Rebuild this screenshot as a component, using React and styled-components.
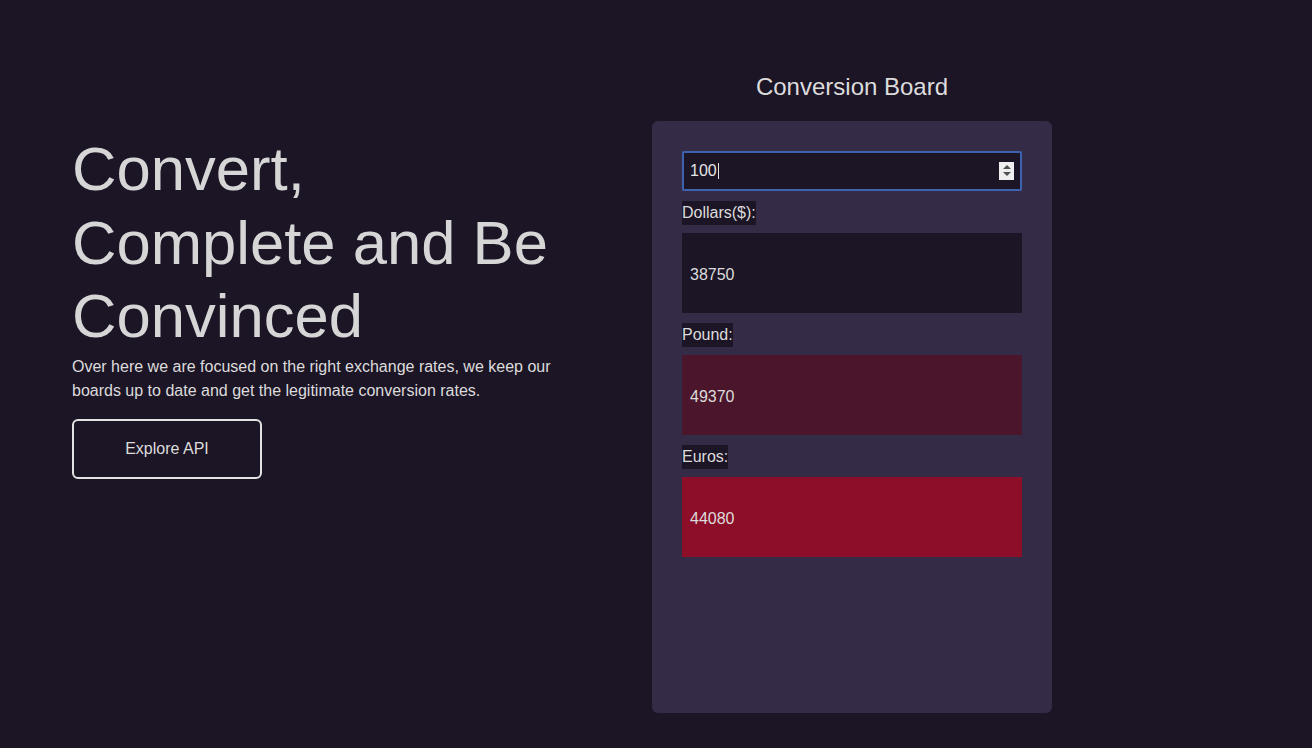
import styled, { createGlobalStyle } from 'styled-components';

const GlobalStyle = createGlobalStyle`
	html, body {
		margin: 0;
		padding: 0;
		background: #1c1526;
	}

	body {
		font-family: "Liberation Sans", Arial, sans-serif;
		color: #d9d9d9;
	}
`;

const Page = styled.div`
	display: flex;
	align-items: flex-start;
	box-sizing: border-box;
	width: 1312px;
	height: 748px;
	padding: 73px 0 0 72px;
	background: #1c1526;
	overflow: hidden;
`;

const Hero = styled.section`
	width: 500px;
	margin-top: 59px;
	margin-right: 80px;

	h1 {
		margin: 0;
		font-size: 61.6px;
		font-weight: 400;
		line-height: 73.6px;
		color: #d6d6d6;
	}

	p {
		margin: 2px 0 16px;
		font-size: 16px;
		line-height: 24px;
		color: #dcdcdc;
	}
`;

const OutlineButton = styled.button`
	width: 190px;
	height: 60px;
	background: transparent;
	border: 2px solid #e2e2e2;
	border-radius: 6px;
	color: #dcdcdc;
	font-family: "Liberation Sans", Arial, sans-serif;
	font-size: 16px;
	cursor: pointer;
`;

const Board = styled.section`
	display: flex;
	flex-direction: column;
	align-items: center;
	width: 400px;

	h2 {
		margin: 0 0 20px;
		font-size: 24px;
		font-weight: 400;
		line-height: 27.6px;
		color: #dcdcdc;
	}
`;

const Card = styled.div`
	box-sizing: border-box;
	width: 400px;
	height: 592px;
	padding: 30px;
	background: #342b46;
	border-radius: 6px;
`;

const AmountField = styled.div`
	display: flex;
	align-items: center;
	box-sizing: border-box;
	height: 40px;
	padding: 0 6px;
	background: #1c1526;
	border: 2px solid #3e63ae;
	border-radius: 2px;
	font-size: 16px;
	color: #e4e4e4;

	.caret {
		width: 1px;
		height: 16px;
		margin-left: 1px;
		background: #e4e4e4;
	}
`;

const Spinner = styled.span`
	display: flex;
	flex-direction: column;
	justify-content: center;
	align-items: center;
	gap: 3px;
	width: 15px;
	height: 18px;
	margin-left: auto;
	background: #efefef;

	i {
		width: 0;
		height: 0;
		border-left: 4px solid transparent;
		border-right: 4px solid transparent;
	}

	.up {
		border-bottom: 4px solid #505050;
	}

	.down {
		border-top: 4px solid #505050;
	}
`;

const Label = styled.label`
	display: inline-block;
	margin: 10px 0 8px;
	line-height: 24px;
	font-size: 16px;
	background: #1c1526;
	color: #dcdcdc;
`;

const Result = styled.div`
	display: flex;
	align-items: center;
	box-sizing: border-box;
	height: 80px;
	padding: 4px 0 0 8px;
	background: ${({ $tone }) => $tone};
	font-size: 16px;
	color: #dcdcdc;
`;

const rates = [
	{ label: 'Dollars($):', value: 38750, tone: '#1c1526' },
	{ label: 'Pound:', value: 49370, tone: '#4b152b' },
	{ label: 'Euros:', value: 44080, tone: '#8c0e29' },
];

const App = () => {
	return (
		<Page>
			<GlobalStyle />
			<Hero>
				<h1>Convert, Complete and Be Convinced</h1>
				<p>
					Over here we are focused on the right exchange rates, we keep our
					boards up to date and get the legitimate conversion rates.
				</p>
				<OutlineButton>Explore API</OutlineButton>
			</Hero>
			<Board>
				<h2>Conversion Board</h2>
				<Card>
					<AmountField>
						<span>100</span>
						<span className="caret" />
						<Spinner>
							<i className="up" />
							<i className="down" />
						</Spinner>
					</AmountField>
					{rates.map((rate) => (
						<div key={rate.label}>
							<Label>{rate.label}</Label>
							<Result $tone={rate.tone}>{rate.value}</Result>
						</div>
					))}
				</Card>
			</Board>
		</Page>
	);
};

export default App;
